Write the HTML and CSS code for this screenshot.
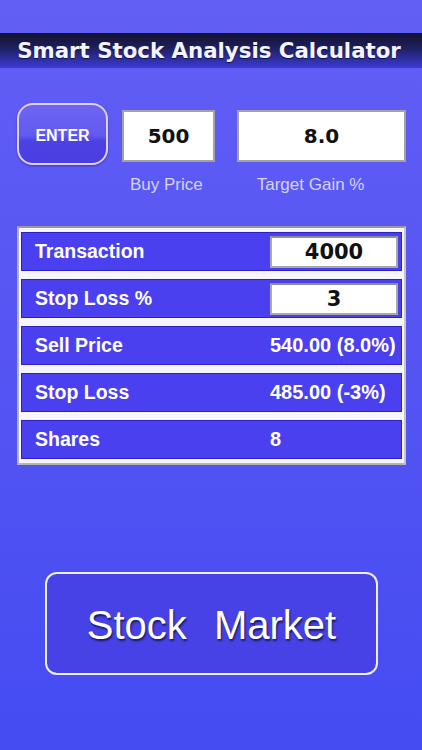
FILE: index.html
```html
<!DOCTYPE html>
<html lang="en">
<head>
    <meta charset="UTF-8">
    <meta name="viewport" content="width=device-width, initial-scale=1.0">
    <title>Smart Stock Analysis Calculator</title>
    <link rel="stylesheet" href="styles.css">
</head>
<body>
    <div id="title-bar">Smart Stock Analysis Calculator</div>

    <div id="entry-row">
        <button id="enter-button">ENTER</button>
        <div class="entry-box" id="buy-box">500</div>
        <div class="entry-box" id="gain-box">8.0</div>
    </div>
    <div id="entry-labels">
        <div class="entry-label" id="buy-label">Buy Price</div>
        <div class="entry-label" id="gain-label">Target Gain %</div>
    </div>

    <div id="results">
        <div class="result-row">
            <div class="result-name">Transaction</div>
            <div class="result-input">4000</div>
        </div>
        <div class="result-row">
            <div class="result-name">Stop Loss %</div>
            <div class="result-input">3</div>
        </div>
        <div class="result-row">
            <div class="result-name">Sell Price</div>
            <div class="result-value">540.00 (8.0%)</div>
        </div>
        <div class="result-row">
            <div class="result-name">Stop Loss</div>
            <div class="result-value">485.00 (-3%)</div>
        </div>
        <div class="result-row">
            <div class="result-name">Shares</div>
            <div class="result-value">8</div>
        </div>
    </div>

    <button id="market-button">Stock Market</button>
</body>
</html>
```

FILE: styles.css
```css
body {
    margin: 0;
    height: 750px;
    padding-top: 33px;
    box-sizing: border-box;
    background: linear-gradient(#625ff5, #5655f3 45%, #444cf2);
    font-family: 'Liberation Sans', Arial, sans-serif;
    color: #fff;
}
#title-bar {
    height: 35px;
    line-height: 35px;
    text-align: center;
    padding-right: 4px;
    font-family: 'DejaVu Sans', sans-serif;
    font-weight: bold;
    font-size: 21.3px;
    color: #f4f4ff;
    text-shadow: 0 1px 1px rgba(0, 0, 20, 0.7);
    background: linear-gradient(#11112e, #1e1e5c 40%, #3434b8 85%, #3c3cd0);
}
#entry-row {
    display: flex;
    align-items: flex-start;
    margin-top: 35px;
    padding-left: 17px;
}
#enter-button {
    width: 91px;
    height: 62px;
    border: 2px solid #ddd0f4;
    border-radius: 16px;
    background: linear-gradient(#6d66f2, #635aef 52%, #4d41e3 62%, #4a3ee0);
    box-shadow: 0 1px 2px rgba(30, 20, 120, 0.5);
    color: #fff;
    font-family: 'Liberation Sans', Arial, sans-serif;
    font-weight: bold;
    font-size: 16px;
    padding: 4px 0 0;
}
.entry-box {
    box-sizing: border-box;
    height: 52px;
    margin-top: 7px;
    background: #fff;
    border: 2px solid #a2a2a2;
    color: #111;
    font-family: 'DejaVu Sans', sans-serif;
    font-weight: bold;
    font-size: 20px;
    display: flex;
    align-items: center;
    justify-content: center;
}
#buy-box {
    width: 93px;
    margin-left: 14px;
}
#gain-box {
    width: 169px;
    margin-left: 22px;
}
#entry-labels {
    display: flex;
    margin-top: 10px;
    padding-left: 130px;
    height: 20px;
    line-height: 20px;
    font-size: 17px;
    color: #d6d3ff;
}
#gain-label {
    margin-left: 54px;
}
#results {
    box-sizing: border-box;
    width: 389px;
    margin: 31px 0 0 17px;
    padding: 4px 2px;
    display: flex;
    flex-direction: column;
    gap: 8px;
    background: #f5f5fb;
    border: 2px solid #b4b4b4;
    border-top-color: #9a9a9a;
    border-right-color: #c6c6c6;
}
.result-row {
    box-sizing: border-box;
    height: 39px;
    display: grid;
    grid-template-columns: 1fr 128px;
    align-items: center;
    padding: 0 3px 0 13px;
    background: #4a40ef;
    border: 1px solid #2a22c6;
    font-weight: bold;
}
.result-name {
    font-size: 19.5px;
}
.result-value {
    font-size: 20px;
}
.result-input {
    box-sizing: border-box;
    height: 32px;
    background: #fff;
    border: 2px solid #a8a8a8;
    border-top-color: #8e8e8e;
    color: #111;
    font-family: 'DejaVu Sans', sans-serif;
    font-size: 21px;
    display: flex;
    align-items: center;
    justify-content: center;
}
#market-button {
    display: block;
    width: 333px;
    height: 103px;
    margin: 107px 0 0 45px;
    background: #4742e6;
    border: 2px solid #eeeeff;
    border-radius: 12px;
    color: #fff;
    font-family: 'Liberation Sans', Arial, sans-serif;
    font-size: 40px;
    word-spacing: 16px;
    text-shadow: 1px 2px 2px rgba(0, 0, 40, 0.65);
    padding: 4px 0 0;
}
```
